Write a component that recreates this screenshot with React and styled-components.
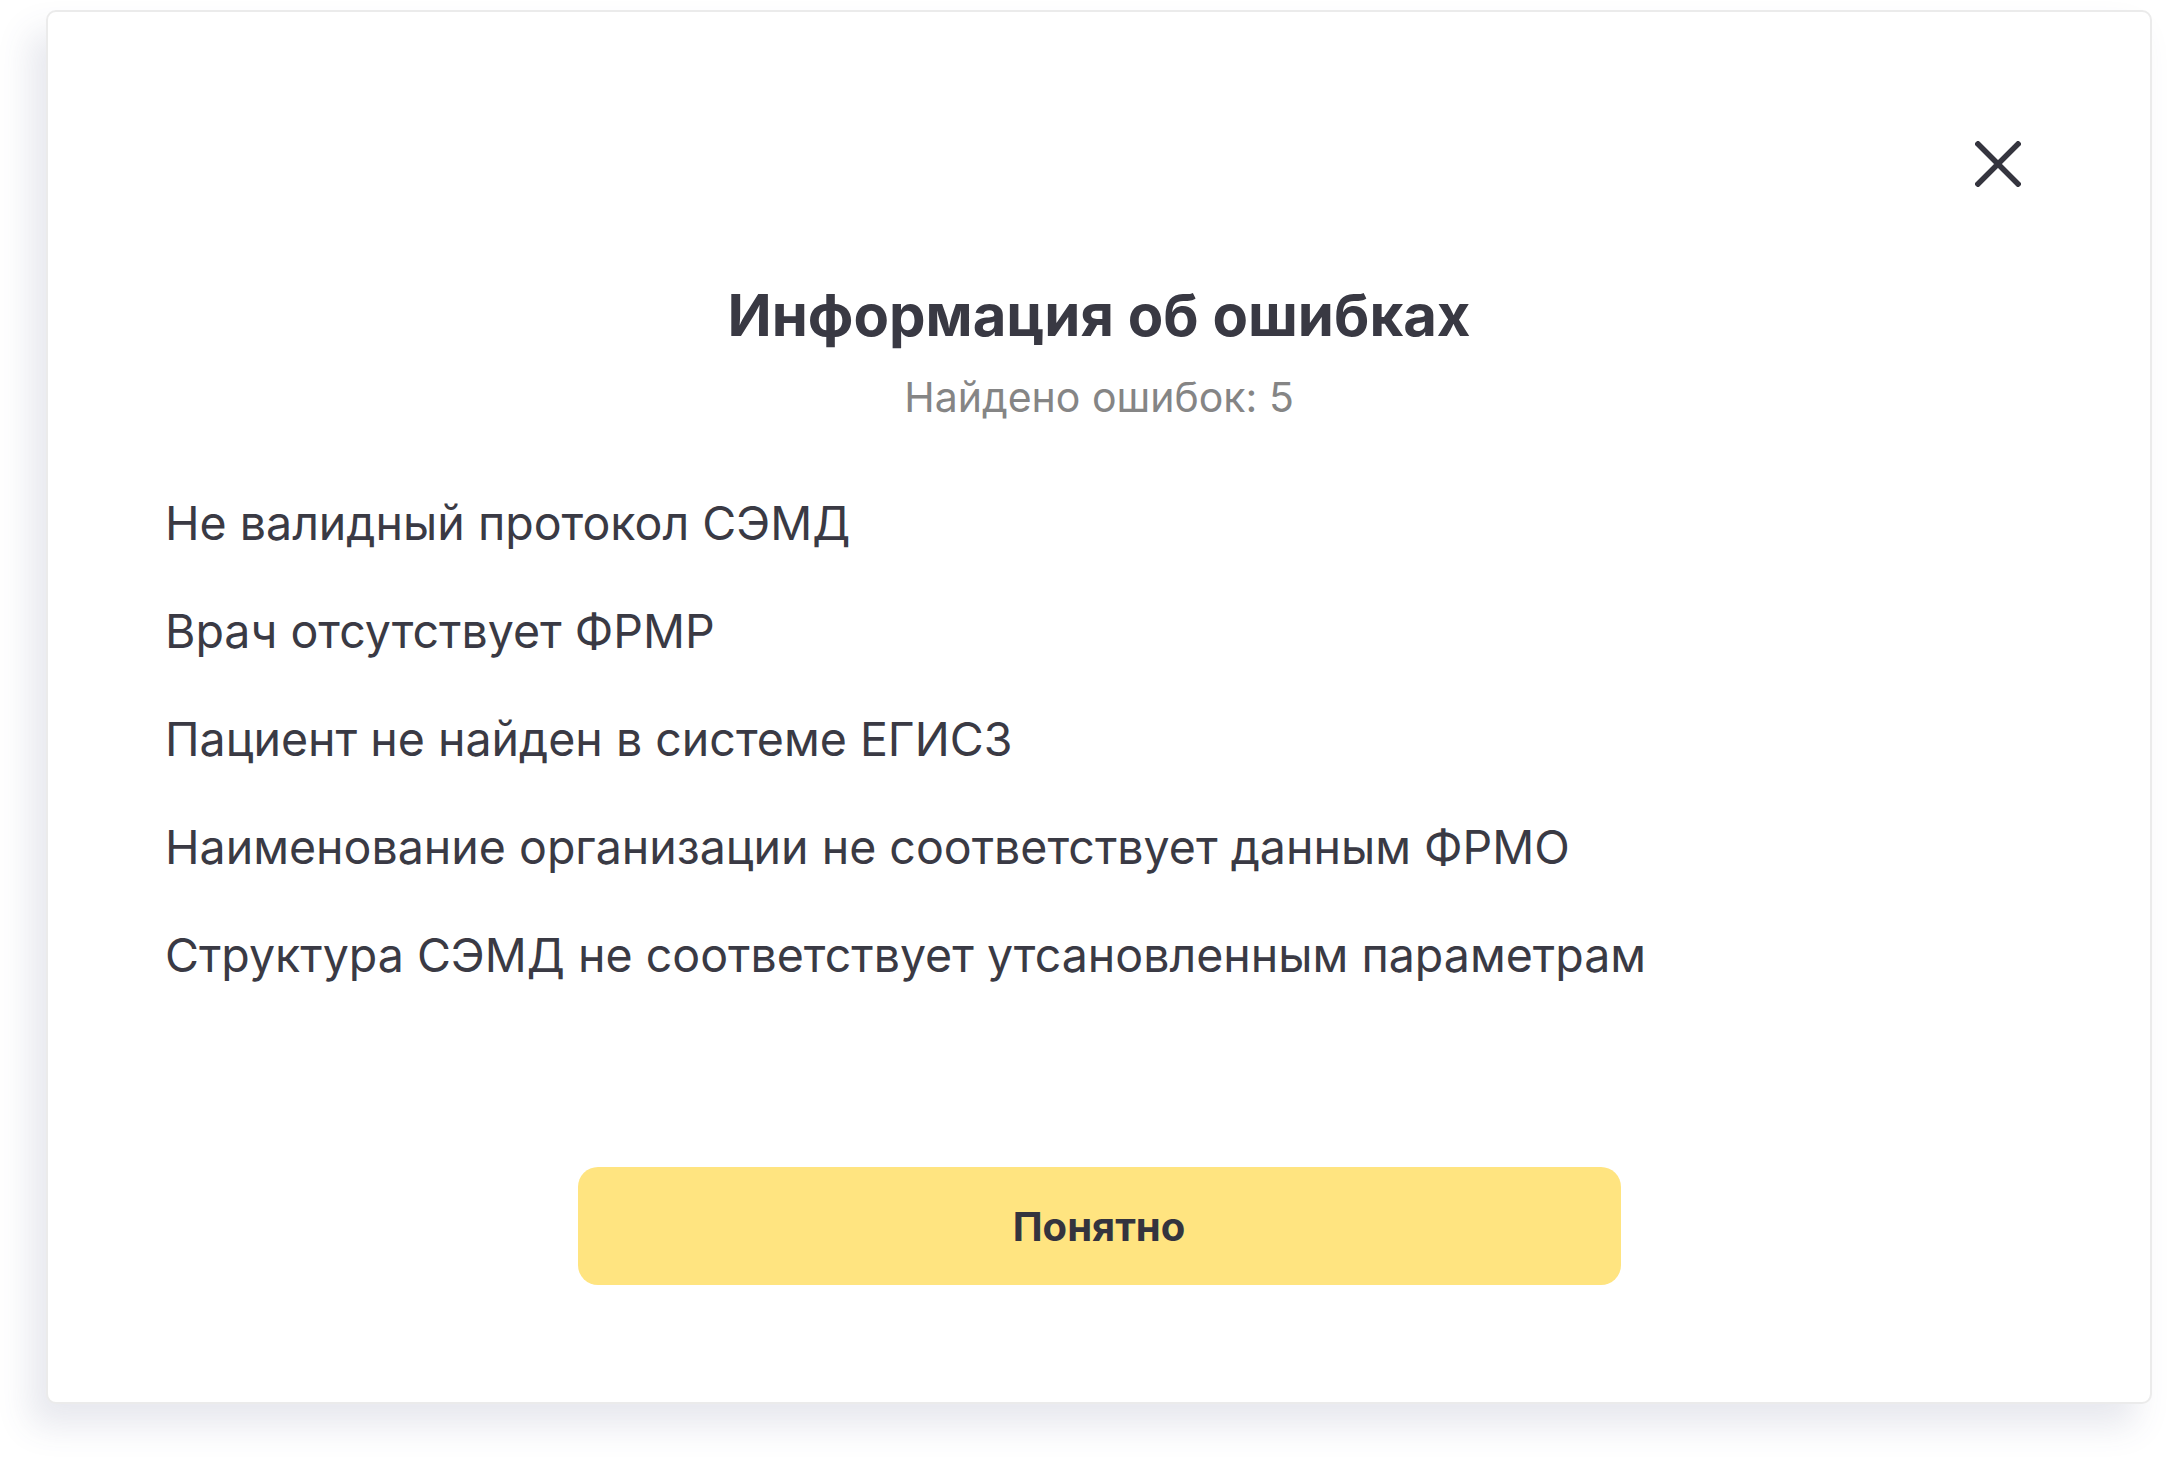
import React from 'react'
import styled, { createGlobalStyle } from 'styled-components'

const GlobalStyle = createGlobalStyle`
    html, body {
        margin: 0;
        padding: 0;
        background: #ffffff;
    }
    body {
        font-family: Inter, "Noto Sans", "Liberation Sans", sans-serif;
        color: #3a3a44;
    }
`;

const errors = [
    'Не валидный протокол СЭМД',
    'Врач отсутствует ФРМР',
    'Пациент не найден в системе ЕГИСЗ',
    'Наименование организации не соответствует данным ФРМО',
    'Структура СЭМД не соответствует утсановленным параметрам',
];

function CloseIcon() {
    return (
        <svg width="46" height="46" viewBox="0 0 46 46" fill="none">
            <path d="M3 3L43 43M43 3L3 43" stroke="#35353f" strokeWidth="5.5" strokeLinecap="square" />
        </svg>
    )
}

function App() {
    return (
        <>
            <GlobalStyle />
            <Page>
                <Modal>
                    <Header>
                        <CloseButton type="button" aria-label="Закрыть">
                            <CloseIcon />
                        </CloseButton>
                    </Header>
                    <Title>Информация об ошибках</Title>
                    <Subtitle>Найдено ошибок: {errors.length}</Subtitle>
                    <ErrorList>
                        {errors.map((text) => (
                            <ErrorItem key={text}>{text}</ErrorItem>
                        ))}
                    </ErrorList>
                    <Footer>
                        <ConfirmButton type="button">Понятно</ConfirmButton>
                    </Footer>
                </Modal>
            </Page>
        </>
    )
}

const Page = styled.div`
    padding: 10px 23px 60px 46px;
`;

const Modal = styled.div`
    box-sizing: border-box;
    width: 2106px;
    height: 1394px;
    background: #ffffff;
    border: 2px solid #ebebeb;
    border-radius: 10px;
    box-shadow: -16px 22px 34px rgba(70, 80, 120, 0.13);
    display: flex;
    flex-direction: column;
    padding: 129px 117px 0;
`;

const Header = styled.div`
    display: flex;
    justify-content: flex-end;
    height: 46px;
    margin-right: 12px;
`;

const CloseButton = styled.button`
    display: flex;
    align-items: center;
    justify-content: center;
    width: 46px;
    height: 46px;
    padding: 0;
    border: none;
    background: none;
    cursor: pointer;
`;

const Title = styled.h1`
    margin: 93px 0 0;
    font-size: 58px;
    line-height: 70px;
    font-weight: 650;
    text-align: center;
    color: #393943;
`;

const Subtitle = styled.p`
    margin: 22px 0 0;
    font-size: 41px;
    line-height: 50px;
    font-weight: 400;
    text-align: center;
    color: #858585;
`;

const ErrorList = styled.ul`
    list-style: none;
    margin: 71px 0 0;
    padding: 0;
    display: flex;
    flex-direction: column;
    gap: 48px;
`;

const ErrorItem = styled.li`
    font-size: 46.5px;
    line-height: 60px;
    color: #3a3a44;
`;

const Footer = styled.div`
    display: flex;
    justify-content: center;
    margin-top: 182px;
`;

const ConfirmButton = styled.button`
    width: 1043px;
    height: 118px;
    border: none;
    border-radius: 20px;
    background: #ffe480;
    font-family: inherit;
    font-size: 40px;
    font-weight: 700;
    color: #34343e;
    cursor: pointer;
`;

export default App
